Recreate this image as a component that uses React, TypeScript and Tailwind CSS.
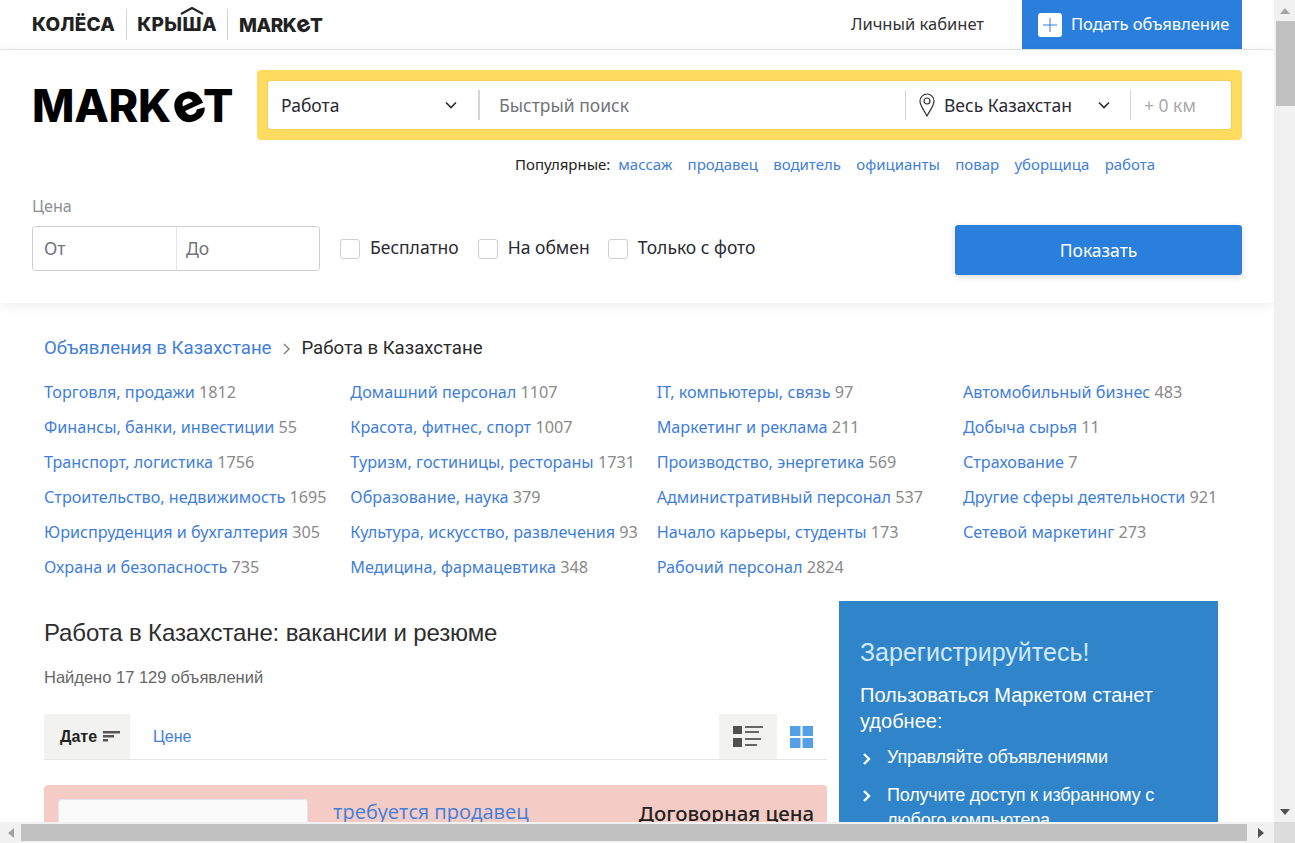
import React from "react";

const logo = "font-['Inter','Liberation_Sans',sans-serif] font-extrabold text-[#222] leading-none";

function Chevron() {
  return (
    <svg width="14" height="9" viewBox="0 0 14 9" fill="none" stroke="#2b2b2b" strokeWidth="1.6">
      <path d="M2 1.5 7 6.5 12 1.5" />
    </svg>
  );
}

const cats: [string, number][][] = [
  [["Торговля, продажи", 1812], ["Финансы, банки, инвестиции", 55], ["Транспорт, логистика", 1756], ["Строительство, недвижимость", 1695], ["Юриспруденция и бухгалтерия", 305], ["Охрана и безопасность", 735]],
  [["Домашний персонал", 1107], ["Красота, фитнес, спорт", 1007], ["Туризм, гостиницы, рестораны", 1731], ["Образование, наука", 379], ["Культура, искусство, развлечения", 93], ["Медицина, фармацевтика", 348]],
  [["IT, компьютеры, связь", 97], ["Маркетинг и реклама", 211], ["Производство, энергетика", 569], ["Административный персонал", 537], ["Начало карьеры, студенты", 173], ["Рабочий персонал", 2824]],
  [["Автомобильный бизнес", 483], ["Добыча сырья", 11], ["Страхование", 7], ["Другие сферы деятельности", 921], ["Сетевой маркетинг", 273]],
];

const popular = ["массаж", "продавец", "водитель", "официанты", "повар", "уборщица", "работа"];

export default function App() {
  return (
    <div className="w-[1295px] h-[843px] overflow-hidden flex flex-col bg-white font-['Noto_Sans','Open_Sans',sans-serif] text-[#222]">
      <div className="flex flex-1 min-h-0">
        <div className="w-[1274px] overflow-hidden">
          {/* top bar */}
          <div className="h-[50px] border-b border-[#e6e6e6] flex items-center pl-[32px] pr-[32px]">
            <span className={`${logo} text-[19px] tracking-[0.2px]`}>КОЛЁСА</span>
            <div className="w-px h-[31px] bg-[#d5d5d5] ml-[11px] mr-[10px]" />
            <span className={`${logo} relative text-[19px] tracking-[0.4px]`}>
              КРЫША
              <svg className="absolute left-[41px] top-[-9px]" width="28" height="9" viewBox="0 0 28 9" fill="none" stroke="#222" strokeWidth="2">
                <path d="M3 8 14 2 25 8" />
              </svg>
            </span>
            <div className="w-px h-[31px] bg-[#d5d5d5] ml-[10px] mr-[11px]" />
            <span className={`${logo} text-[19px] tracking-[-0.4px] flex items-baseline`}>
              MARK<span className="inline-block text-[23px] -rotate-[25deg]">e</span>T
            </span>
            <span className="ml-auto text-[16.5px] mr-[38px] text-[#333] -mt-[1px]">Личный кабинет</span>
            <div className="h-[49px] w-[220px] bg-[#2a7fdd] flex items-center pl-[16px] gap-[9px] text-white text-[16.5px] self-start">
              <span className="w-[24px] h-[24px] bg-white rounded-[3px] flex items-center justify-center">
                <svg width="14" height="14" viewBox="0 0 14 14" stroke="#2a7fdd" strokeWidth="1">
                  <path d="M7 0v14M0 7h14" />
                </svg>
              </span>
              <span className="-mt-[1px]">Подать объявление</span>
            </div>
          </div>

          {/* search panel */}
          <div className="h-[253px] pl-[32px] pr-[32px] shadow-[0_2px_12px_rgba(0,0,0,0.08)] relative">
            <div className="flex items-start pt-[20px]">
              <div className={`${logo} font-black text-black text-[45px] w-[225px] mt-[6px] tracking-[-0.3px] flex items-baseline`}>
                MARK<span className="inline-block text-[54px] -rotate-[25deg]">e</span>T
              </div>
              <div className="w-[985px] h-[70px] bg-[#ffdc60] rounded-[4px] p-[11px] flex">
                <div className="flex-1 bg-white rounded-[3px] shadow-[0_0_0_1px_#f0cf5c] flex items-center text-[17.5px]">
                  <div className="w-[210px] flex items-center justify-between pl-[13px] pr-[20px] text-[#2a2a33]">
                    <span>Работа</span>
                    <Chevron />
                  </div>
                  <div className="w-[2px] h-[30px] bg-[#d4d4d8]" />
                  <div className="w-[425px] pl-[19px] text-[#70747a]">Быстрый поиск</div>
                  <div className="w-px h-[30px] bg-[#d4d4d8]" />
                  <div className="w-[224px] flex items-center pl-[13px] pr-[19px] text-[#2a2a33]">
                    <svg width="16" height="24" viewBox="0 0 16 24" fill="none" stroke="#333" strokeWidth="1.2" className="mr-[9px]">
                      <path d="M8 23C5 17 1 13 1 8a7 7 0 0 1 14 0c0 5-4 9-7 15Z" />
                      <circle cx="8" cy="8" r="3" />
                    </svg>
                    <span>Весь Казахстан</span>
                    <span className="ml-auto"><Chevron /></span>
                  </div>
                  <div className="w-px h-[30px] bg-[#d4d4d8]" />
                  <div className="pl-[13px] text-[#a9a9a9]">+ 0 км</div>
                </div>
              </div>
            </div>

            <div className="flex items-center ml-[483px] mt-[14px] text-[15px] leading-[20px]">
              <span className="text-[#222] mr-[8px]">Популярные:</span>
              <div className="flex gap-[15.3px] text-[#3f7edb]">
                {popular.map((p) => (
                  <span key={p}>{p}</span>
                ))}
              </div>
            </div>

            <div className="text-[16.2px] leading-[20px] text-[#8b8f96] mt-[22px]">Цена</div>
            <div className="flex items-start mt-[9px]">
              <div className="w-[288px] h-[45px] border border-[#cfcfcf] rounded-[3px] flex items-center text-[17.5px] text-[#70747a] mt-[1px]">
                <div className="w-[144px] h-full flex items-center pl-[11px] border-r border-[#e6e6e6]">От</div>
                <div className="pl-[9px]">До</div>
              </div>
              <div className="flex items-center h-[45px] mt-[1px] text-[17.5px] text-[#2a2a33]">
                <span className="w-[20px] h-[20px] ml-[20px] mr-[10px] border border-[#cfcfcf] rounded-[3px]" />
                <span className="mb-[3px]">Бесплатно</span>
                <span className="w-[20px] h-[20px] ml-[19px] mr-[10px] border border-[#cfcfcf] rounded-[3px]" />
                <span className="mb-[3px]">На обмен</span>
                <span className="w-[20px] h-[20px] ml-[18px] mr-[10px] border border-[#cfcfcf] rounded-[3px]" />
                <span className="mb-[3px]">Только с фото</span>
              </div>
              <div className="ml-auto w-[287px] h-[50px] bg-[#2a7fdd] rounded-[3px] shadow-[0_2px_6px_rgba(0,0,0,0.15)] flex items-center justify-center text-white text-[17.5px]">
                Показать
              </div>
            </div>
          </div>

          {/* content */}
          <div className="pl-[44px]">
            <div className="flex items-center h-[24px] mt-[34px] font-['Roboto',sans-serif] text-[18.6px]">
              <span className="text-[#3f7edb]">Объявления в Казахстане</span>
              <svg width="9" height="12" viewBox="0 0 9 12" fill="none" stroke="#777" strokeWidth="1.3" className="ml-[11px] mr-[10px]">
                <path d="M2 1l5 5-5 5" />
              </svg>
              <span className="text-[#2a2a2a]">Работа в Казахстане</span>
            </div>

            <div className="grid grid-cols-[repeat(4,306.33px)] mt-[14px] text-[16.2px] w-[1225px]">
              {cats.map((col, i) => (
                <div key={i} className="flex flex-col">
                  {col.map(([n, c]) => (
                    <div key={n} className="h-[35px] leading-[35px] whitespace-nowrap text-[#3f7edb]">
                      {n} <span className="text-[#8a8a8a]">{c}</span>
                    </div>
                  ))}
                </div>
              ))}
            </div>

            <div className="flex mt-[16px] font-['Liberation_Sans',sans-serif]">
              <div className="w-[783px]">
                <h1 className="text-[24px] leading-[28px] mt-[18px] text-[#2e2e2e] tracking-[-0.13px]">Работа в Казахстане: вакансии и резюме</h1>
                <div className="text-[16.5px] leading-[20px] mt-[20px] text-[#666]">Найдено 17 129 объявлений</div>
                <div className="flex h-[46px] border-b border-[#e6e6e6] mt-[27px] relative text-[16px]">
                  <div className="w-[86px] h-[45px] bg-[#f2f2f0] flex items-center pl-[16px] font-bold text-[#222] gap-[6px]">
                    Дате
                    <svg width="17" height="11" viewBox="0 0 17 11" fill="#555">
                      <path d="M0 0h17v2.4H0zM0 4h11v2.4H0zM0 8h5v2.4H0z" />
                    </svg>
                  </div>
                  <div className="flex items-center pl-[23px] text-[#3f7edb]">Цене</div>
                  <div className="ml-auto w-[58px] h-[45px] bg-[#f2f2f0] flex items-center justify-center pb-[1px]">
                    <svg width="30" height="21" viewBox="0 0 30 21">
                      <path fill="#505050" d="M0 0h9v8H0zM0 12h9v9H0z" />
                      <path fill="#666" d="M12 0h18v2H12zM12 5h14v2H12zM12 12h16v2H12zM12 18h12v2H12z" />
                    </svg>
                  </div>
                  <div className="w-[50px] flex items-center pl-[13px]">
                    <svg width="23" height="22" viewBox="0 0 23 22" fill="#559fe6">
                      <path d="M0 0h10.500v10H0zM12.500 0h10.500v10H12.500zM0 12h10.500v10H0zM12.500 12h10.500v10H12.500z" />
                    </svg>
                  </div>
                </div>
                <div className="h-[140px] bg-[#f5ccc5] rounded-[4px] mt-[25px] flex items-start pl-[14px] pr-[13px] pt-[14px]">
                  <div className="w-[250px] h-[100px] bg-[#fafafa] border border-[#e3e3ea] rounded-[3px]" />
                  <div className="ml-[25px] text-[20px] leading-[26px] text-[#3f7edb] font-['Open_Sans',sans-serif]">требуется продавец</div>
                  <div className="ml-auto text-[20.4px] leading-[28px] text-[#222] font-['Noto_Sans',sans-serif] font-medium">Договорная цена</div>
                </div>
              </div>
              <div className="w-[379px] ml-[12px] h-[300px] bg-[#3084c9] pl-[21px] pr-[21px] pt-[35px] text-white">
                <div className="text-[25px] leading-[32px] text-[#cfe9f8]">Зарегистрируйтесь!</div>
                <div className="text-[20px] leading-[26px] mt-[14px]">Пользоваться Маркетом станет удобнее:</div>
                <div className="flex mt-[11px] text-[18px] leading-[25px] tracking-[-0.2px]">
                  <svg width="10" height="14" viewBox="0 0 10 14" fill="none" stroke="#fff" strokeWidth="2.4" className="mt-[7px] ml-[2px] mr-[15px] shrink-0">
                    <path d="M2 2l5 5-5 5" />
                  </svg>
                  Управляйте объявлениями
                </div>
                <div className="flex mt-[13px] text-[18px] leading-[25px] tracking-[-0.2px]">
                  <svg width="10" height="14" viewBox="0 0 10 14" fill="none" stroke="#fff" strokeWidth="2.4" className="mt-[6px] ml-[2px] mr-[15px] shrink-0">
                    <path d="M2 2l5 5-5 5" />
                  </svg>
                  <span>Получите доступ к избранному с любого компьютера</span>
                </div>
              </div>
            </div>
          </div>
        </div>

        {/* vertical scrollbar */}
        <div className="w-[21px] bg-[#f1f1f1] flex flex-col items-center pl-[1px]">
          <div className="h-[21px] flex items-center justify-center">
            <svg width="10" height="6" viewBox="0 0 10 6" fill="#a3a3a3"><path d="M5 0l5 6H0z" /></svg>
          </div>
          <div className="w-[19px] h-[85px] bg-[#c1c1c1]" />
          <div className="mt-auto h-[21px] flex items-center justify-center">
            <svg width="10" height="6" viewBox="0 0 10 6" fill="#505050"><path d="M5 6l5-6H0z" /></svg>
          </div>
        </div>
      </div>

      {/* horizontal scrollbar */}
      <div className="h-[21px] flex bg-[#f1f1f1] shrink-0">
        <div className="w-[21px] flex items-center justify-center">
          <svg width="6" height="10" viewBox="0 0 6 10" fill="#a3a3a3"><path d="M0 5l6 5V0z" /></svg>
        </div>
        <div className="w-[1226px] h-[17px] mt-[2px] bg-[#c1c1c1]" />
        <div className="w-[27px] flex items-center justify-center">
          <svg width="6" height="10" viewBox="0 0 6 10" fill="#505050"><path d="M6 5L0 10V0z" /></svg>
        </div>
        <div className="w-[21px] bg-[#dcdcdc]" />
      </div>
    </div>
  );
}
